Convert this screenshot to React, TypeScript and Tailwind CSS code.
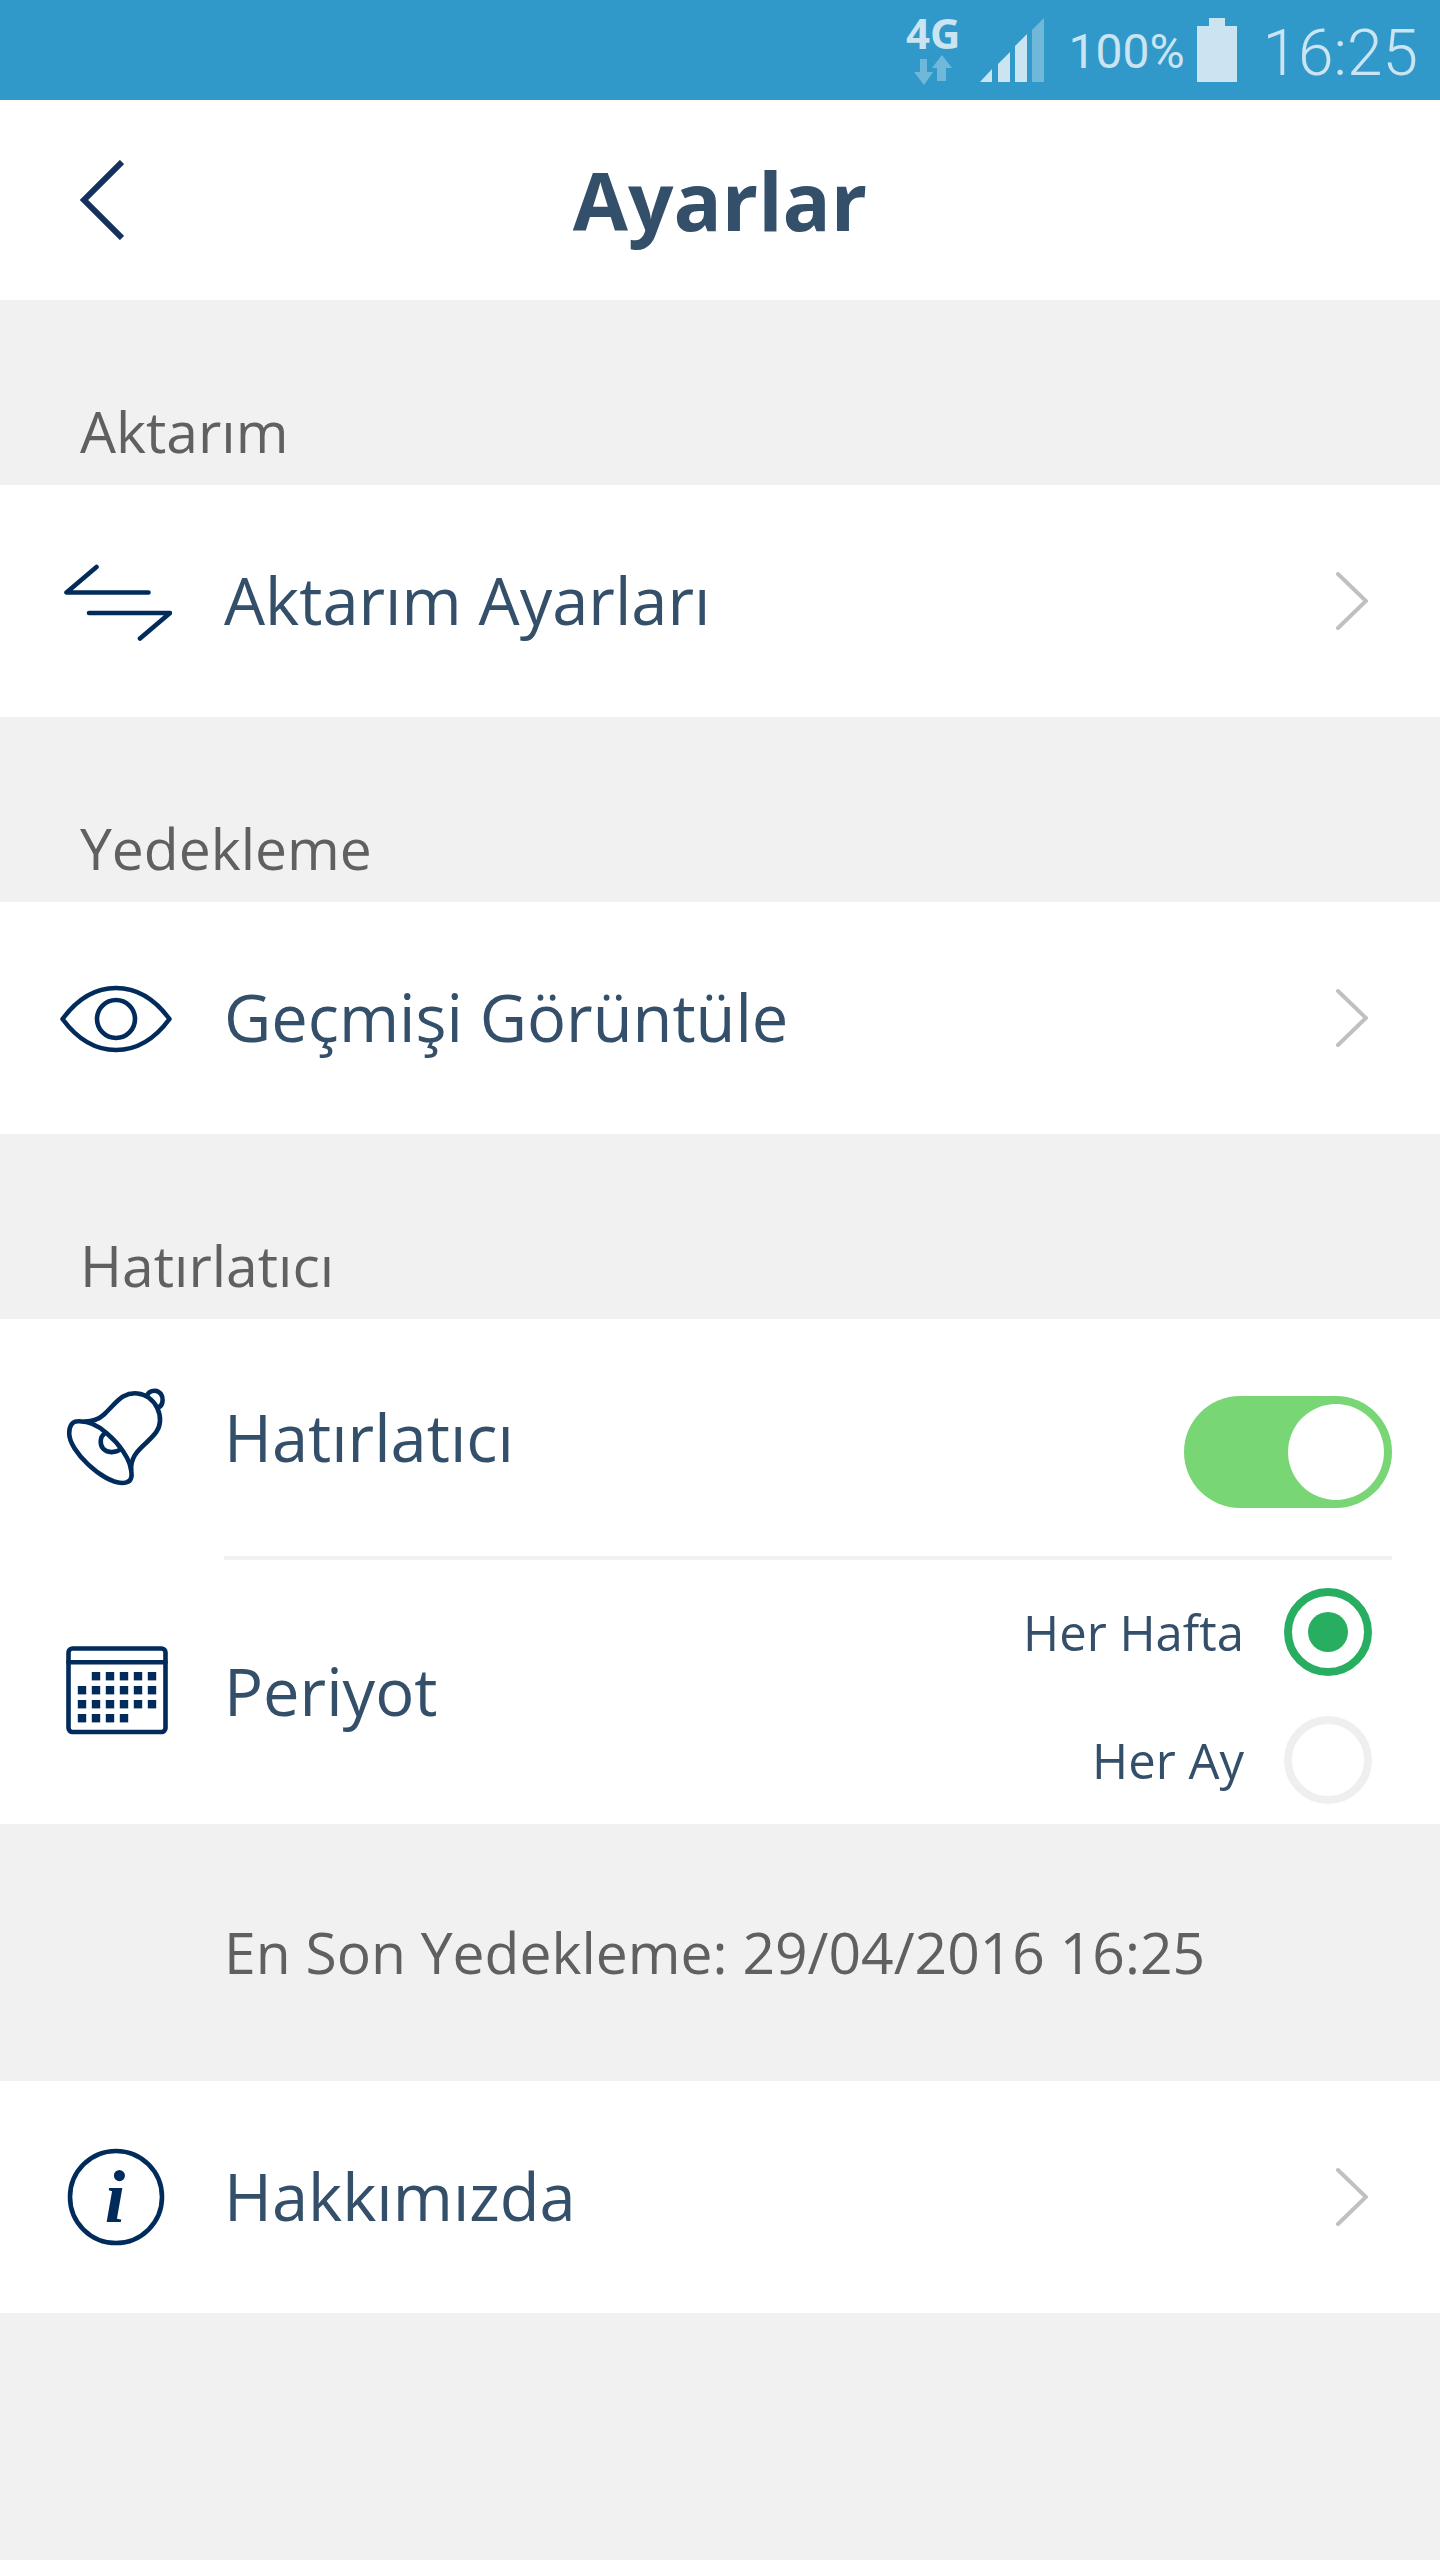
import { useState, type ReactNode } from "react";

const PERIODS = [
  { value: "week", label: "Her Hafta" },
  { value: "month", label: "Her Ay" },
];

const CALENDAR_DAYS = [
  [1, 2, 3, 4, 5],
  [0, 1, 2, 3, 4, 5],
  [0, 1, 2, 3, 4, 5],
  [0, 1, 2, 3],
];

/* Icons */

function RowIcon({ children }: { children: ReactNode }) {
  return (
    <svg
      viewBox="0 0 112 112"
      className="size-28 shrink-0 fill-none stroke-[#002b5a] stroke-[4.6]"
      strokeLinecap="round"
      strokeLinejoin="round"
      aria-hidden="true"
    >
      {children}
    </svg>
  );
}

function TransferIcon() {
  return (
    <RowIcon>
      <path d="M36.5 22 6.500 47.500H88.500M29 68h81L80 93.500" />
    </RowIcon>
  );
}

function EyeIcon() {
  return (
    <RowIcon>
      <path d="M2.500 57C18 36 36 26 56 26s38 10 53.500 31C94 78 76 88 56 88S18 78 2.500 57Z" />
      <circle cx="56" cy="57" r="19" />
    </RowIcon>
  );
}

function BellIcon() {
  return (
    <RowIcon>
      {/* mouth */}
      <path d="M9.200 51.500C9.200 43.500 12.500 39.300 18 39.300C28 39 38 43 47 51.500C57 60 72 77 71.600 93C71.500 99 68 101 62 101C42 100 9.200 69 9.200 51.500Z" />
      {/* body */}
      <path d="M25 39.500C33 39.500 38 38 44 32.500C51 26 56.500 18.500 63 14.500C73 9 83 11.500 88.500 15.500C96 21 100.500 30 100 39C99.500 49 93 54 86 61C76 70 71 76 71 88" />
      <path d="M87 13.500C88.500 10 92 8.600 95 8.700C100 9 103 13.500 102.600 18.500C102.400 22 101 24.500 98 25.500" />
      {/* clapper */}
      <path d="M44.500 51.500C40 55 39.500 62 43 66.500C47 71 55 71.500 61 67" />
    </RowIcon>
  );
}

function CalendarIcon() {
  return (
    <RowIcon>
      <rect x="8.500" y="12.500" width="97" height="83.500" rx="4" />
      <path d="M8.500 26.300h97" />
      {CALENDAR_DAYS.map((days, week) =>
        days.map((day) => (
          <rect
            key={`${week}-${day}`}
            x={17.8 + day * 14}
            y={36 + week * 14}
            width="8.400"
            height="8.400"
            className="fill-[#002b5a] stroke-none"
          />
        ))
      )}
    </RowIcon>
  );
}

function InfoIcon() {
  return (
    <RowIcon>
      <circle cx="56" cy="56" r="46" />
      <text
        x="55"
        y="81"
        textAnchor="middle"
        className="fill-[#002b5a] stroke-none font-['Liberation_Serif',serif] text-[74px] font-bold italic"
      >
        i
      </text>
    </RowIcon>
  );
}

function Chevron() {
  return (
    <svg
      viewBox="0 0 34 60"
      className="h-15 w-8.5 shrink-0 fill-none stroke-[#c0c0c0] stroke-4"
      strokeLinecap="round"
      aria-hidden="true"
    >
      <path d="M4 3 32 30 4 57" />
    </svg>
  );
}

/* Layout */

function StatusBar() {
  return (
    <div className="flex h-25 items-center justify-end bg-[#3199c9] pr-5.5 font-[Roboto,sans-serif] text-[#cbe4f1]">
      <div className="mr-5 flex flex-col items-center gap-1">
        <span className="font-['Open_Sans',sans-serif] text-[42px] leading-9 font-bold">4G</span>
        <svg viewBox="0 0 38 30" className="h-7.5 w-9.5 fill-[#6fb8da]" aria-hidden="true">
          <path d="M6 4h7v13h6L10 30 0 17h6ZM23 26V13h-5L28 0l10 13h-6v13Z" />
        </svg>
      </div>
      <svg viewBox="0 0 64 64" className="mr-6 size-16 fill-current" aria-hidden="true">
        <path d="M0 64 12 51v13ZM18 64V46L30 34v30ZM35 64V28L47 16v48Z" />
        <path d="M52 64V12L64 0v64Z" className="fill-[#6fb8da]" />
      </svg>
      <span className="mr-3 pt-1 text-[48px]">100%</span>
      <svg viewBox="0 0 40 64" className="mr-6.5 h-16 w-10 fill-current" aria-hidden="true">
        <path d="M12 0h16v8h12v56H0V8h12Z" />
      </svg>
      <span className="pt-2 text-[64px] font-light">16:25</span>
    </div>
  );
}

function SectionTitle({ children }: { children: ReactNode }) {
  return (
    <h2 className="flex h-[185px] items-end px-20 pb-6 text-[57px] leading-15 text-[#606060]">
      {children}
    </h2>
  );
}

function LinkRow({ icon, label, href }: { icon: ReactNode; label: string; href: string }) {
  return (
    <a href={href} className="flex h-[232px] items-center gap-13 bg-white pr-18 pl-15">
      {icon}
      <span className="flex-1 text-[65px]">{label}</span>
      <Chevron />
    </a>
  );
}

export default function App() {
  const [reminder, setReminder] = useState(true);
  const [period, setPeriod] = useState("week");

  return (
    <div className="min-h-screen bg-[#f1f1f1] font-['Open_Sans','Noto_Sans',sans-serif] text-[#344f69]">
      <StatusBar />

      <header className="grid h-50 grid-cols-[1fr_auto_1fr] items-center bg-white px-20">
        <button type="button" aria-label="Geri" className="justify-self-start">
          <svg viewBox="0 0 44 80" className="h-20 w-11 fill-none stroke-[#15315e] stroke-[6]" aria-hidden="true">
            <path d="M42 2 4 40l38 38" />
          </svg>
        </button>
        <h1 className="text-[80px] font-bold">Ayarlar</h1>
      </header>

      <main>
        <SectionTitle>Aktarım</SectionTitle>
        <LinkRow icon={<TransferIcon />} label="Aktarım Ayarları" href="#aktarim" />

        <SectionTitle>Yedekleme</SectionTitle>
        <LinkRow icon={<EyeIcon />} label="Geçmişi Görüntüle" href="#gecmis" />

        <SectionTitle>Hatırlatıcı</SectionTitle>
        <div className="bg-white">
          <div className="flex h-[237px] items-center gap-13 pr-12 pl-15">
            <BellIcon />
            <label htmlFor="reminder" className="flex-1 text-[65px]">
              Hatırlatıcı
            </label>
            <input
              id="reminder"
              type="checkbox"
              role="switch"
              checked={reminder}
              onChange={(e) => setReminder(e.target.checked)}
              className="mt-7 flex h-28 w-52 appearance-none items-center rounded-full bg-[#e5e5e5] px-2 before:size-24 before:rounded-full before:bg-white checked:justify-end checked:bg-[#79d675]"
            />
          </div>

          <div className="mr-12 ml-56 h-1 bg-[#f1f1f1]" />

          <fieldset className="flex items-center gap-13 pr-17 pl-15" aria-labelledby="period">
            <CalendarIcon />
            <span id="period" className="flex-1 text-[65px]">
              Periyot
            </span>
            <div className="flex flex-col gap-10 pt-7 pb-5">
              {PERIODS.map(({ value, label }) => (
                <label key={value} className="flex items-center justify-end gap-10 text-[49px] leading-15">
                  {label}
                  <input
                    type="radio"
                    name="period"
                    value={value}
                    checked={period === value}
                    onChange={() => setPeriod(value)}
                    className="flex size-22 appearance-none items-center justify-center rounded-full border-8 border-[#efefef] before:size-10 before:rounded-full checked:border-[#28ae60] checked:before:bg-[#28ae60]"
                  />
                </label>
              ))}
            </div>
          </fieldset>
        </div>

        <p className="flex h-[257px] items-center pl-56 text-[57px] text-[#606060]">
          En Son Yedekleme: 29/04/2016 16:25
        </p>

        <LinkRow icon={<InfoIcon />} label="Hakkımızda" href="#hakkimizda" />
      </main>
    </div>
  );
}
